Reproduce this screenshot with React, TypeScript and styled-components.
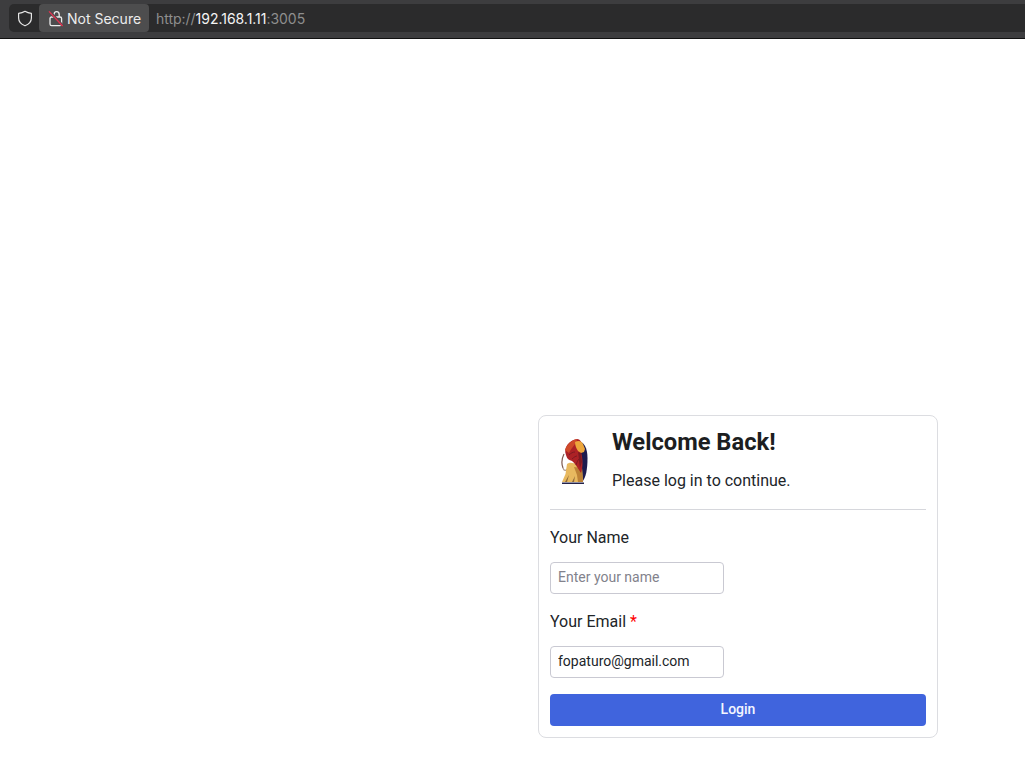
import React from "react";
import styled, { createGlobalStyle } from "styled-components";

const Global = createGlobalStyle`
  html, body {
    margin: 0;
    padding: 0;
    background: #fff;
    font-family: Roboto, "Liberation Sans", sans-serif;
  }
`;

const Page = styled.div`
  width: 1025px;
  height: 771px;
  display: flex;
  flex-direction: column;
  overflow: hidden;
`;

const BrowserBar = styled.header`
  height: 39px;
  box-sizing: border-box;
  padding: 4px 0 6px 9px;
  background: #3d3d3f;
  border-bottom: 1px solid #111;
`;

const UrlBox = styled.div`
  height: 28px;
  display: flex;
  align-items: center;
  background: #2b2b2c;
  border-radius: 5px 0 0 5px;
  font-family: Inter, "Noto Sans", sans-serif;
  font-size: 14px;
`;

const ShieldSlot = styled.div`
  width: 30px;
  box-sizing: border-box;
  padding-left: 2px;
  display: flex;
  justify-content: center;
  align-items: center;
`;

const SecureChip = styled.div`
  height: 28px;
  width: 110px;
  box-sizing: border-box;
  padding-left: 9px;
  display: flex;
  align-items: center;
  gap: 3px;
  background: #4d4d4e;
  border-radius: 4px;
  color: #ececec;
`;

const Url = styled.div`
  margin-left: 7px;
  color: #8e8e8e;
  letter-spacing: -0.03px;
`;

const UrlHost = styled.span`
  color: #f4f4f4;
`;

const Main = styled.main`
  flex: 1;
  display: flex;
  justify-content: flex-end;
  align-items: flex-start;
  padding: 376px 87px 0 0;
`;

const Card = styled.section`
  width: 400px;
  height: 323px;
  box-sizing: border-box;
  padding: 11px;
  background: #fff;
  border: 1px solid #dcdde1;
  border-radius: 8px;
  color: #212529;
`;

const CardHeader = styled.div`
  display: flex;
  gap: 12px;
  height: 82px;
  border-bottom: 1px solid #d6d7dc;
`;

const LogoSlot = styled.div`
  width: 50px;
  padding-top: 11px;
  display: flex;
  align-items: flex-start;
  justify-content: center;
`;

const HeaderText = styled.div`
  display: flex;
  flex-direction: column;
  padding-top: 1px;
`;

const Title = styled.h1`
  margin: 0;
  font-size: 23.7px;
  font-weight: 700;
  line-height: 29px;
  color: #1c1e21;
`;

const Subtitle = styled.p`
  margin: 12px 0 0;
  font-size: 16px;
  line-height: 24px;
`;

const Form = styled.form`
  display: flex;
  flex-direction: column;
`;

const Label = styled.label`
  margin-top: 16px;
  font-size: 16px;
  line-height: 24px;
`;

const Star = styled.span`
  color: #f00;
`;

const Input = styled.input`
  width: 174px;
  height: 32px;
  box-sizing: border-box;
  margin-top: 12px;
  padding: 0 7px 2px;
  border: 1px solid #c9c9d2;
  border-radius: 4px;
  background: #fff;
  color: #212529;
  font-family: Roboto, "Liberation Sans", sans-serif;
  font-size: 14px;
  outline: none;

  &::placeholder {
    color: #82828c;
    opacity: 1;
  }
`;

const LoginButton = styled.button`
  height: 32px;
  margin-top: 16px;
  padding: 0 0 2px;
  border: none;
  border-radius: 4px;
  background: #4064dd;
  color: #f4f6ff;
  font-family: Roboto, "Liberation Sans", sans-serif;
  font-size: 14px;
  font-weight: 500;
`;

const ShieldIcon = () => (
  <svg width="16" height="17" viewBox="0 0 16 17" fill="none">
    <path
      d="M8 1.3 C10 2.6 12 3.2 14.4 3.4 V8 C14.4 11.6 11.6 14.4 8 15.8 C4.4 14.4 1.6 11.6 1.6 8 V3.4 C4 3.2 6 2.6 8 1.3 Z"
      stroke="#e6e6e6"
      strokeWidth="1.2"
      strokeLinejoin="round"
    />
  </svg>
);

const BrokenLockIcon = () => (
  <svg width="16" height="17" viewBox="0 0 16 17" fill="none">
    <path
      d="M6 7 V4.6 C6 2.9 7.1 1.7 8.6 1.7 C10.1 1.7 11.2 2.9 11.2 4.6 V7"
      stroke="#ececec"
      strokeWidth="1.3"
    />
    <path
      d="M2 8.6 V14 C2 15 2.6 15.6 3.6 15.6 H12 C13 15.6 13.6 15 13.6 14 V8.6 C13.6 7.6 13 7 12 7 H3.6 C2.6 7 2 7.6 2 8.6 Z"
      stroke="#ececec"
      strokeWidth="1.3"
    />
    <path d="M1 0.8 L14.6 15.6" stroke="#4d4d4e" strokeWidth="2.8" />
    <path d="M1 1.4 L14.6 16" stroke="#e5304f" strokeWidth="1.3" />
  </svg>
);

// drawn small, the reference logo is a lion about 30x46
const LionLogo = () => (
  <svg width="30" height="47" viewBox="0 0 30 47">
    <path d="M17 3 C24 3 27.5 10 27.5 20 C27.5 31 26 40 22 44 L14 32 Z" fill="#1d1b4e" />
    <path d="M3 30 C1 25 2 20 4 16" fill="none" stroke="#7d5a50" strokeWidth="1.2" />
    <path d="M3 30 C4 33 6 33 7 31" fill="none" stroke="#b09a8c" strokeWidth="1.2" />
    <path d="M7 26 C11 23 18 26 22 30 L23 44 H2 L5.5 36 Z" fill="#e8b95f" />
    <path d="M9 37 L7 44 H5 Z M15 38 L14 44 H12 Z" fill="#8f6a3a" />
    <path d="M14 29 L17 37 L18 44 H23 L22 30 Z" fill="#bd8236" />
    <path d="M6 17 C3 10 9 2 17 1 C20 1 22 4 22 8 L21 14 C23 21 23 29 21 35 C18 31 16 26 12 23 C9 22 7 21 6 17 Z" fill="#ad2226" />
    <path d="M5 12 C7 6 12 2 17 1 C17 5 12 9 9 15 Z" fill="#cf4a2a" />
    <path d="M9 17 C11 15 13 14 15 14 M12 21 C14 19 16 18 17 18 M16 27 C17 24 18 22 19 21" fill="none" stroke="#7e1a22" strokeWidth="1" />
    <path d="M15 4 C18 2 22 3 23 6 L25 11 L24 14 L21 15 L18 13 C16 10 15 7 15 4 Z" fill="#eda63c" />
    <path d="M18 14 C19 19 19 25 20 30 L22 24 L21 15 Z" fill="#7e1a22" />
    <path d="M2 44.5 H24 V46 H2 Z" fill="#23224a" />
  </svg>
);

export default function App() {
  return (
    <Page>
      <Global />
      <BrowserBar>
        <UrlBox>
          <ShieldSlot>
            <ShieldIcon />
          </ShieldSlot>
          <SecureChip>
            <BrokenLockIcon />
            Not Secure
          </SecureChip>
          <Url>
            http://<UrlHost>192.168.1.11</UrlHost>:3005
          </Url>
        </UrlBox>
      </BrowserBar>
      <Main>
        <Card>
          <CardHeader>
            <LogoSlot>
              <LionLogo />
            </LogoSlot>
            <HeaderText>
              <Title>Welcome Back!</Title>
              <Subtitle>Please log in to continue.</Subtitle>
            </HeaderText>
          </CardHeader>
          <Form onSubmit={(e) => e.preventDefault()}>
            <Label>Your Name</Label>
            <Input placeholder="Enter your name" />
            <Label>
              Your Email <Star>*</Star>
            </Label>
            <Input defaultValue="fopaturo@gmail.com" />
            <LoginButton type="submit">Login</LoginButton>
          </Form>
        </Card>
      </Main>
    </Page>
  );
}
